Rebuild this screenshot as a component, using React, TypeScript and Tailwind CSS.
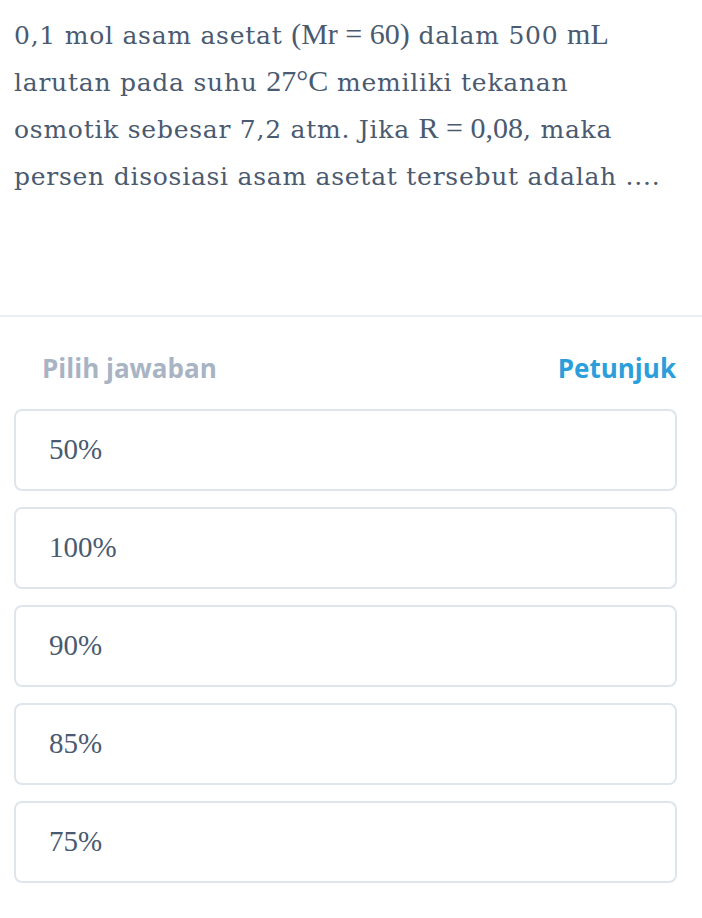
const options = ["50%", "100%", "90%", "85%", "75%"];

function M({ children }: { children: React.ReactNode }) {
  return (
    <span className="font-['Liberation_Serif',serif] text-[30px] leading-[40px] tracking-normal">
      {children}
    </span>
  );
}

export default function App() {
  return (
    <div className="w-[702px] min-h-[918px] bg-white">
      <div className="px-[14px] pt-[12px] h-[315px] font-['DejaVu_Serif',serif] text-[25px] leading-[47px] tracking-[0.75px] text-[#4a5a70] whitespace-nowrap">
        0,1 mol asam asetat <M>(Mr = 60)</M> dalam 500 <M>mL</M>
        <br />
        larutan pada suhu <M>27°C</M> memiliki tekanan
        <br />
        osmotik sebesar 7,2 atm. Jika <M>R = 0,08</M>, maka
        <br />
        persen disosiasi asam asetat tersebut adalah ....
      </div>
      <div className="border-t-2 border-[#eaeff4]" />
      <div className="flex items-center justify-between pl-[42px] pr-[26px] pt-[10px] h-[92px] font-['Open_Sans',sans-serif] font-bold text-[26px]">
        <span className="text-[#a8b3c4]">Pilih jawaban</span>
        <span className="text-[#2b9fdb]">Petunjuk</span>
      </div>
      <div className="flex flex-col gap-[16px] pl-[14px] pr-[25px]">
        {options.map((o) => (
          <div
            key={o}
            className="h-[82px] flex items-center px-[33px] border-2 border-[#dfe5ec] rounded-[8px] font-['Liberation_Serif',serif] text-[29px] text-[#4a5a70]"
          >
            {o}
          </div>
        ))}
      </div>
    </div>
  );
}
